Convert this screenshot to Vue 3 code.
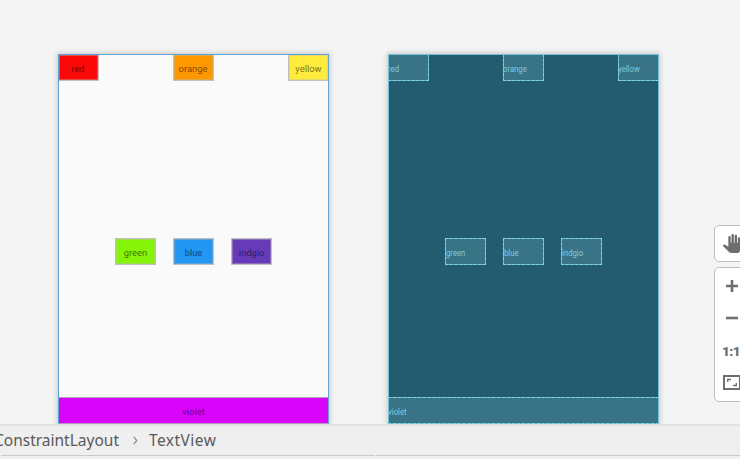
<script setup>
const top = ['red', 'orange', 'yellow']
const middle = ['green', 'blue', 'indgio']
const panels = ['design', 'blueprint']
</script>

<template>
  <div class="editor">
    <main class="surface">
      <section v-for="panel in panels" :key="panel" class="panel" :class="panel">
        <div class="row edges">
          <div v-for="name in top" :key="name" class="view" :class="name"><span>{{ name }}</span></div>
        </div>
        <div class="row center">
          <div v-for="name in middle" :key="name" class="view" :class="name"><span>{{ name }}</span></div>
        </div>
        <div class="view violet"><span>violet</span></div>
      </section>
      <aside class="tools">
        <div class="tool-group pan">
          <svg width="19" height="19" viewBox="0 0 24 24"><path fill="#6e6e6e" d="M23 5.500V20c0 2.200-1.800 4-4 4h-7.300c-1.080 0-2.100-.43-2.850-1.190L1 14.830s1.260-1.230 1.300-1.250c.22-.19.490-.29.790-.29.220 0 .420.060.600.160.040.010 4.310 2.460 4.310 2.460V4c0-.83.670-1.500 1.500-1.500S11 3.170 11 4v7h1V1.500c0-.83.670-1.500 1.500-1.500S15 .67 15 1.500V11h1V2.500c0-.83.670-1.500 1.500-1.500s1.500.67 1.500 1.500V11h1V5.500c0-.83.670-1.500 1.500-1.500s1.500.67 1.500 1.500z" /></svg>
        </div>
        <div class="tool-group zoom">
          <svg width="16" height="14" viewBox="0 0 16 14"><path d="M2 7h12M8 1v12" stroke="#6e6e6e" stroke-width="2.600" /></svg>
          <svg width="16" height="14" viewBox="0 0 16 14"><path d="M2 7h12" stroke="#6e6e6e" stroke-width="2.600" /></svg>
          <span class="ratio">1:1</span>
          <svg width="18" height="15" viewBox="0 0 18 15"><path d="M1 1h16v13H1z" fill="none" stroke="#6e6e6e" stroke-width="2" /><path d="M4.700 7V4.500H8M10 10.500h3.300V8" fill="none" stroke="#6e6e6e" stroke-width="1.400" /></svg>
        </div>
      </aside>
    </main>
    <footer class="crumbs">
      <div class="path">
        <span class="parent">ConstraintLayout</span>
        <svg width="5" height="9" viewBox="0 0 5 9"><path d="M.8.8 3.800 4.500.8 8.200" fill="none" stroke="#8a8a8a" stroke-width="1.200" /></svg>
        <span class="current">TextView</span>
      </div>
      <div class="rule"><i></i><i></i></div>
    </footer>
  </div>
</template>

<style>
body { margin: 0; overflow: hidden; }
</style>

<style scoped>
* { box-sizing: border-box; }
.editor { width: 740px; height: 459px; display: flex; flex-direction: column; overflow: hidden; background: #f4f4f4; }
.surface { height: 424px; flex: none; display: flex; padding: 54px 0 0 58px; overflow: hidden; }
.panel { flex: none; width: 271px; height: 370px; margin-right: 59px; display: flex; flex-direction: column; justify-content: space-between; position: relative; background: #fafafa; box-shadow: 0 0 5px 1px #c8c8c8; }
.panel::after { content: ""; position: absolute; inset: 0; border: 1px solid #5fa3db; border-bottom: 0; }
.blueprint { background: #235c6f; margin-right: 55px; }
.blueprint::after { border-color: #74c3d6; }
.row { display: flex; }
.edges { justify-content: space-between; }
.center { justify-content: center; gap: 17px; margin-top: 24px; }
.view { width: 41px; height: 27px; flex: none; display: flex; align-items: center; justify-content: center; padding-top: 3px; border: 1px solid #bfbfbf; box-shadow: inset 0 0 0 1px rgba(188, 188, 188, .4); font: 9.400px/12px Roboto, sans-serif; color: rgba(0, 0, 0, .56); white-space: nowrap; }
.design .edges .view span { margin-left: -1px; }
.design .edges .yellow span { margin-left: 0; }
.view.violet { width: 100%; }
.design .red { background: #fc0808; }
.design .orange { background: #ff9800; }
.design .yellow { background: #ffeb3b; }
.design .green { background: #86f407; }
.design .blue { background: #2196f3; }
.design .indgio { background: #673ab7; }
.design .violet { background: #d904fb; border-color: #b19bb8; box-shadow: none; }
.blueprint .view { justify-content: flex-start; background: #397386; border: 1px dashed #9bdfed; box-shadow: none; color: #82cbdc; font-size: 9px; outline: 1px solid rgba(120, 205, 223, .7); outline-offset: -1px; }
.blueprint .view span { transform: scaleX(.86); transform-origin: left; margin-left: -1px; }
.blueprint .center .view span { margin-left: 0; }
.tools { flex: none; width: 30px; padding-top: 171px; display: flex; flex-direction: column; gap: 5px; }
.tool-group { width: 36px; flex: none; background: #fff; border: 1px solid #bdbdbd; border-radius: 5px; display: flex; }
.pan { height: 37px; padding: 8px 0 0 8px; }
.pan svg { margin-left: -1px; }
.zoom { height: 135px; flex-direction: column; align-items: center; padding-top: 11px; }
.zoom svg { flex: none; }
.zoom svg + svg { margin-top: 18px; }
.ratio { margin-top: 18px; font: 900 13.500px/16px Roboto, sans-serif; color: #6e6e6e; letter-spacing: -.5px; margin-left: -2px; }
.ratio + svg { margin-top: 16px; margin-left: -1px; }
.crumbs { height: 35px; background: #efefef; border-top: 2px solid #e2e2e2; display: flex; flex-direction: column; }
.path { height: 29px; display: flex; align-items: center; font: 15.500px/29px "Noto Sans", sans-serif; color: #5a5a5a; white-space: nowrap; }
.parent { width: 119px; display: flex; justify-content: flex-end; }
.current { letter-spacing: .45px; }
.path svg { margin: 0 11px 0 14px; }
.rule { display: flex; gap: 1px; height: 1px; padding-left: 1px; }
.rule i { background: #c9c9c9; flex: none; width: 374px; }
</style>
